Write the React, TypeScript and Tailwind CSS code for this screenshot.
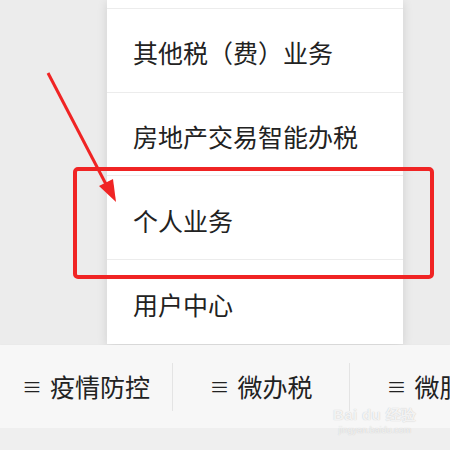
import React from 'react'

const menuItems = ['其他税（费）业务', '房地产交易智能办税', '个人业务', '用户中心']
const tabs = ['疫情防控', '微办税', '微服务']

export default function App() {
  return (
    <div
      className="relative w-[450px] h-[450px] overflow-hidden bg-[#ececec] flex flex-col"
      style={{ fontFamily: '"Noto Sans CJK SC", "Noto Sans", sans-serif' }}
    >
      {/* popup menu */}
      <div className="h-[345px] flex">
        <div className="ml-[107px] w-[296px] h-[344px] bg-white shadow-[0_2px_10px_rgba(0,0,0,0.12)] flex flex-col">
          <div className="h-[9px] border-b border-[#ececec]" />
          {menuItems.map((t, i) => (
            <div
              key={i}
              className={`h-[84px] flex items-center pl-[26px] pt-[5px] text-[25px] text-[#222] ${i < menuItems.length - 1 ? 'border-b border-[#ececec]' : ''}`}
            >
              {t}
            </div>
          ))}
        </div>
      </div>

      {/* bottom tab bar */}
      <div className="h-[83px] bg-[#f7f7f7] flex items-center overflow-hidden shadow-[0_1px_3px_rgba(0,0,0,0.06)]">
        {tabs.map((t, i) => (
          <React.Fragment key={i}>
            {i > 0 && <div className="w-px h-[48px] bg-[#e4e4e4] shrink-0" />}
            <div className={`${i === 0 ? 'w-[172px]' : 'w-[176px]'} shrink-0 flex items-center justify-center gap-[8px] text-[#222]`}>
              <span className="text-[20px] leading-none">≡</span>
              <span className="text-[25px] leading-none">{t}</span>
            </div>
          </React.Fragment>
        ))}
      </div>
      <div className="flex-1 bg-[#efefef]" />

      {/* baidu watermark */}
      <div className="absolute left-[333px] top-[407px] flex flex-col items-center text-white/80 pointer-events-none" style={{ fontFamily: '"Liberation Sans", sans-serif' }}>
        <div className="text-[15px] font-bold leading-none tracking-wide [text-shadow:0_0_1px_rgba(0,0,0,0.25)]">Bai du 经验</div>
        <div className="text-[9px] leading-none mt-[4px] [text-shadow:0_0_1px_rgba(0,0,0,0.25)]">jingyan.baidu.com</div>
      </div>

      {/* red highlight box */}
      <div className="absolute left-[73px] top-[167px] w-[361px] h-[112px] border-[4px] border-[#f02424] rounded-[5px]" />

      {/* red arrow */}
      <svg className="absolute left-0 top-0" width="450" height="450" viewBox="0 0 450 450">
        <line x1="48" y1="73" x2="109" y2="190" stroke="#f02424" strokeWidth="3" />
        <polygon points="116,202 99,186 113,179" fill="#f02424" />
      </svg>
    </div>
  )
}
